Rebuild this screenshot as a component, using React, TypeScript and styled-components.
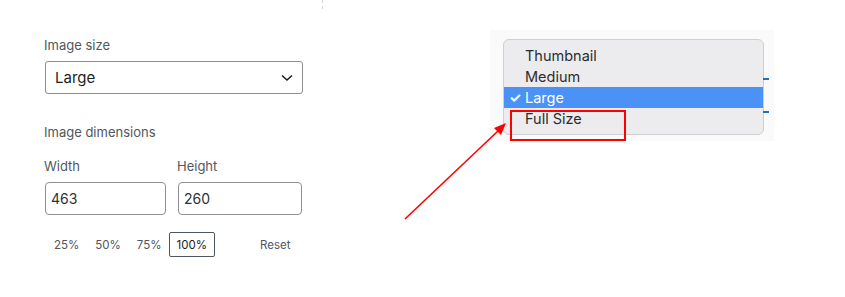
import styled, { createGlobalStyle } from "styled-components";

const GlobalStyle = createGlobalStyle`
  html, body {
    margin: 0;
    padding: 0;
    background: #ffffff;
  }
  body {
    font-family: Inter, "Liberation Sans", sans-serif;
    width: 845px;
    height: 297px;
    overflow: hidden;
  }
`;

const Page = styled.div`
  position: relative;
  width: 845px;
  height: 297px;
  display: flex;
`;

const Panel = styled.div`
  width: 259px;
  padding: 37px 0 0 44px;
  display: flex;
  flex-direction: column;
`;

const Divider = styled.div`
  position: absolute;
  left: 322px;
  top: 0;
  height: 9px;
  border-left: 1px dashed #d4d4d4;
`;

const Label = styled.div<{ $gap?: number }>`
  font-size: 13px;
  color: #50575e;
  line-height: 16px;
  margin-bottom: ${(p) => p.$gap ?? 8}px;
`;

const Select = styled.div`
  box-sizing: border-box;
  margin-left: 1px;
  width: 258px;
  height: 33px;
  border: 1px solid #8c8f94;
  border-radius: 3px;
  display: flex;
  align-items: center;
  justify-content: space-between;
  padding: 0 8px 0 9px;
  font-size: 15px;
  color: #1e1e1e;
`;

const Section = styled.div`
  margin-top: 30px;
`;

const Fields = styled.div`
  display: flex;
  gap: 11px;
  margin-top: 18px;
`;

const Field = styled.div<{ $w: number }>`
  width: ${(p) => p.$w}px;
  display: flex;
  flex-direction: column;
`;

const Input = styled.div`
  box-sizing: border-box;
  margin-left: 1px;
  height: 33px;
  border: 1px solid #8c8f94;
  border-radius: 4px;
  display: flex;
  align-items: center;
  padding-left: 5px;
  font-size: 14px;
  color: #2c3338;
`;

const Presets = styled.div`
  display: flex;
  align-items: center;
  margin-top: 17px;
  margin-left: 1px;
`;

const Preset = styled.div<{ $active?: boolean }>`
  box-sizing: border-box;
  height: 25px;
  padding: 0 ${(p) => (p.$active ? 7 : 8)}px;
  display: flex;
  align-items: center;
  font-size: 11.5px;
  color: ${(p) => (p.$active ? "#1e1e1e" : "#50575e")};
  border: 1px solid ${(p) => (p.$active ? "#50575e" : "transparent")};
  border-radius: 2px;
  margin-right: ${(p) => (p.$active ? 0 : -2)}px;
`;

const Reset = styled.div`
  margin-left: 45px;
  font-size: 11.5px;
  color: #50575e;
`;

const Stage = styled.div`
  padding: 30px 0 0 187px;
`;

const Halo = styled.div`
  padding: 9px 10px 6px 13px;
  background: #fafafa;
  position: relative;
`;

const Tick = styled.div<{ $top: number }>`
  position: absolute;
  right: 5px;
  top: ${(p) => p.$top}px;
  width: 6px;
  height: 2px;
  background: #2271b1;
`;

const Menu = styled.div`
  width: 261px;
  box-sizing: border-box;
  background: #ececee;
  border: 1px solid #cfcfd1;
  border-radius: 6px;
  padding: 5px 0 5px;
  display: flex;
  flex-direction: column;
  font-family: Inter, "Liberation Sans", sans-serif;
`;

const Option = styled.div<{ $selected?: boolean }>`
  height: 21px;
  display: flex;
  align-items: center;
  font-size: 14.5px;
  padding-left: 21px;
  position: relative;
  color: ${(p) => (p.$selected ? "#ffffff" : "#2c2c2e")};
  background: ${(p) => (p.$selected ? "#4a92f6" : "transparent")};
`;

const Check = styled.span`
  position: absolute;
  left: 5px;
  font-size: 14px;
  font-weight: 700;
`;

const Annotation = styled.svg`
  position: absolute;
  left: 0;
  top: 0;
  pointer-events: none;
`;

const sizes = ["Thumbnail", "Medium", "Large", "Full Size"];

export default function App() {
  return (
    <>
      <GlobalStyle />
      <Page>
        <Divider />
        <Panel>
          <Label>Image size</Label>
          <Select>
            Large
            <svg width="14" height="10" viewBox="0 0 14 10">
              <path d="M2 2.5l5 4.5 5-4.5" fill="none" stroke="#1e1e1e" strokeWidth="1.6" />
            </svg>
          </Select>
          <Section>
            <Label $gap={0}>Image dimensions</Label>
            <Fields>
              <Field $w={122}>
                <Label>Width</Label>
                <Input>463</Input>
              </Field>
              <Field $w={125}>
                <Label>Height</Label>
                <Input>260</Input>
              </Field>
            </Fields>
            <Presets>
              <Preset>25%</Preset>
              <Preset>50%</Preset>
              <Preset>75%</Preset>
              <Preset $active>100%</Preset>
              <Reset>Reset</Reset>
            </Presets>
          </Section>
        </Panel>
        <Stage>
          <Halo>
            <Tick $top={48} />
            <Tick $top={81} />
            <Menu>
              {sizes.map((s) => (
                <Option key={s} $selected={s === "Large"}>
                  {s === "Large" && <Check>✓</Check>}
                  {s}
                </Option>
              ))}
            </Menu>
          </Halo>
        </Stage>
        <Annotation width="845" height="297" viewBox="0 0 845 297">
          <rect x="511" y="111" width="114" height="29" fill="none" stroke="#ff0000" strokeWidth="2" />
          <line x1="405" y1="219" x2="498" y2="131" stroke="#ff0000" strokeWidth="1.6" />
          <path d="M506 123 L494 128 L501 135 Z" fill="#ff0000" />
        </Annotation>
      </Page>
    </>
  );
}
